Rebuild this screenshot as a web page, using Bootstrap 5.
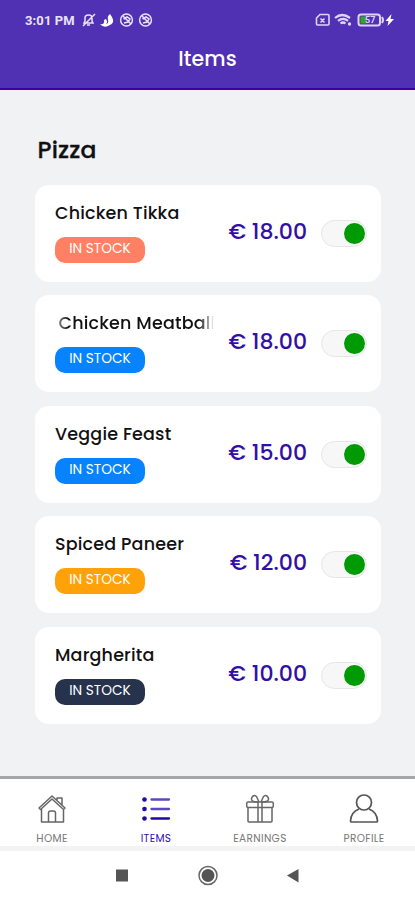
<!DOCTYPE html>
<html lang="en">
<head>
<meta charset="utf-8">
<meta name="viewport" content="width=device-width, initial-scale=1">
<title>Items</title>
<link href="https://cdn.jsdelivr.net/npm/bootstrap@5.3.0/dist/css/bootstrap.min.css" rel="stylesheet">
<style>
body{font-family:Poppins,Inter,"Noto Sans",sans-serif;background:#f0f2f4;width:415px;height:900px;overflow:hidden;line-height:1}
.app-head{height:90px;background:#5030b3;border-bottom:2px solid #3900a6;color:#fff}
.status-row{height:38px;padding:2px 20px 0 25px;color:#e9e2ff}
.clock{font:700 13px Roboto,sans-serif;letter-spacing:.1px}
.page-name{font-size:20.500px;font-weight:500;line-height:42px;letter-spacing:.15px}
.stage{height:686px;padding:61px 34px 0 34.500px}
.section-name{font-size:23.500px;font-weight:500;line-height:23px;margin:-13px 0 23.900px 3px;letter-spacing:.15px;color:#111;-webkit-text-stroke:.3px #111}
.item-card{height:97px;border-radius:14px;margin-bottom:13.500px;padding:15px 14px 0 20.500px}
.item-name{font-size:17.500px;font-weight:500;line-height:26px;color:#111;white-space:nowrap;letter-spacing:.18px;width:160px}
.scrolled{padding-left:3.500px;width:158px;-webkit-mask-image:linear-gradient(90deg,rgba(0,0,0,.35),#000 13px,#000 144px,rgba(0,0,0,.1) 158px)}
.stock{width:90px;height:26px;border-radius:10px;margin-top:11px;font-size:13.700px;line-height:24px;letter-spacing:0;color:#fff}
.coral{background:#ff8062}.azure{background:#0783ff}.amber{background:#ffa20a}.ink{background:#27334d}
.cost{font-size:22px;font-weight:500;color:#3210a5;white-space:nowrap;margin-top:20px;line-height:24px}
.toggle{width:46px;height:27px;border:1px solid #e6e6e6;border-radius:14px;background:#f7f7f7;margin:20px 0 0 14px;padding-right:1px}
.knob{width:21px;height:21px;border-radius:50%;background:#009a05}
.tabs{height:75px;border-top:3px solid #a5a6a8;border-bottom:5px solid #f3f3f3;background:#fff}
.tab{width:104px;flex:none;font-size:10.500px;color:#777;padding-top:14px;letter-spacing:.35px}
.tab.on{color:#3210b5}
.tab svg{display:block;margin-bottom:9px}
.sys{height:49px;background:#fff}
.sys svg{display:block}
</style>
<script src="https://cdn.jsdelivr.net/npm/bootstrap@5.3.0/dist/js/bootstrap.bundle.min.js"></script>
</head>
<body>
<header class="app-head">
<div class="status-row d-flex justify-content-between align-items-center">
<div class="d-flex align-items-center">
<span class="clock">3:01 PM</span>
<svg class="ms-1" width="76" height="18" viewBox="0 0 74 18" fill="none" stroke="#e9e2ff" stroke-width="1.500"><path d="M4 12h9l-1-2V7q0-3-3.500-3T5 7v3zM7 14h3M3 15 15 3"/><path d="M20 13q5 1 4-4l2-1q2 3 0 5 3-1 2-4-1-4 2-6l2 3q3 6-2 8-6 4-10-1z" fill="#fff" stroke="none"/><circle cx="46.500" cy="9" r="5.900"/><circle cx="65.500" cy="9" r="5.900"/><path d="M43.500 8 47 6l3 2-2 3-4 1M62.500 8 66 6l3 2-2 3-4 1M43 5l8 8M62 5l8 8"/></svg>
</div>
<svg width="80" height="18" viewBox="0 0 80 18" fill="none" stroke="#ddd3ff" stroke-width="1.600"><path d="M1.500 7 5 3.500h8q1 0 1 1v8.500q0 1-1 1H2.500q-1 0-1-1zM5.500 7.500l4 4M9.500 7.500l-4 4"/><path d="M20 7q7-6 15 0M23 9.800q5-4 10 0M25.500 12.500q2.500-2 5 0" stroke-width="2.200"/><circle cx="34.500" cy="13" r="1.700" fill="#ddd3ff" stroke="none"/><rect x="43.500" y="3.500" width="21.500" height="11" rx="2.500" stroke-width="2"/><path d="M67 6q2 3 0 6" stroke-width="2"/><path d="M45.500 5.500h6v7h-6z" fill="#35a51b" stroke="none"/><text x="50" y="12.200" font-family="Roboto" font-size="9" font-weight="700" fill="#ddd3ff" stroke="none">57</text><path d="m76.500 3-6 7h3l-1 5 6.500-7h-3.500z" fill="#fff" stroke="none"/></svg>
</div>
<div class="page-name text-center">Items</div>
</header>
<main class="stage">
<h1 class="section-name">Pizza</h1>
<div class="item-card bg-white d-flex"><div class="flex-grow-1"><div class="item-name">Chicken Tikka</div><div class="stock coral text-center">IN STOCK</div></div><div class="cost">€ 18.00</div><div class="toggle d-flex align-items-center justify-content-end"><div class="knob"></div></div></div>
<div class="item-card bg-white d-flex"><div class="flex-grow-1"><div class="item-name scrolled">Chicken Meatball</div><div class="stock azure text-center">IN STOCK</div></div><div class="cost">€ 18.00</div><div class="toggle d-flex align-items-center justify-content-end"><div class="knob"></div></div></div>
<div class="item-card bg-white d-flex"><div class="flex-grow-1"><div class="item-name">Veggie Feast</div><div class="stock azure text-center">IN STOCK</div></div><div class="cost">€ 15.00</div><div class="toggle d-flex align-items-center justify-content-end"><div class="knob"></div></div></div>
<div class="item-card bg-white d-flex"><div class="flex-grow-1"><div class="item-name">Spiced Paneer</div><div class="stock amber text-center">IN STOCK</div></div><div class="cost">€ 12.00</div><div class="toggle d-flex align-items-center justify-content-end"><div class="knob"></div></div></div>
<div class="item-card bg-white d-flex"><div class="flex-grow-1"><div class="item-name">Margherita</div><div class="stock ink text-center">IN STOCK</div></div><div class="cost">€ 10.00</div><div class="toggle d-flex align-items-center justify-content-end"><div class="knob"></div></div></div>
</main>
<nav class="tabs d-flex">
<div class="tab d-flex flex-column align-items-center"><svg width="30" height="32" viewBox="0 0 30 32" fill="none" stroke="#666" stroke-width="1.500" stroke-linejoin="round"><path d="M2 15 15 3l13 12-1.500 1.500L15 6 3.500 16.500zM4.500 16v13h22V16M11.500 29V20q0-2 2-2h3q2 0 2 2v9M20 7V5h5v7"/></svg>HOME</div>
<div class="tab on d-flex flex-column align-items-center"><svg width="30" height="32" viewBox="0 0 30 32" fill="none" stroke="#5b48bf" stroke-width="2.300" stroke-linecap="round"><path d="M10.500 6.500h17.500M10.500 16h17.500"/><path d="M10.500 25.500h17.500" stroke="#2407a5"/><g fill="#2407a5" stroke="none"><circle cx="3.500" cy="6.500" r="2.300"/><circle cx="3.500" cy="16" r="2.300"/><circle cx="3.500" cy="25.500" r="2.300"/></g></svg>ITEMS</div>
<div class="tab d-flex flex-column align-items-center"><svg width="30" height="32" viewBox="0 0 30 32" fill="none" stroke="#666" stroke-width="1.500"><rect x="1.700" y="9" width="26.600" height="5.500" rx="1.500"/><path d="M3 14.500V28q0 1 1 1h22q1 0 1-1V14.500M13 9v20M17 9v20M13 9Q6 9 6.500 5.500 8 1 11.500 3.500L14 9M17 9q7 0 6.500-3.500Q22 1 18.500 3.500L16 9"/></svg>EARNINGS</div>
<div class="tab d-flex flex-column align-items-center"><svg width="30" height="32" viewBox="0 0 30 32" fill="none" stroke="#555" stroke-width="1.700"><circle cx="15" cy="9.500" r="7.500"/><path d="M10 16Q2 19 1.500 28q0 1 1 1h25q1 0 1-1Q28 19 20 16"/></svg>PROFILE</div>
</nav>
<footer class="sys"><svg width="415" height="49" viewBox="0 851 415 49"><path d="M116 869.500h12v12h-12z" fill="#555"/><circle cx="208" cy="875.500" r="9" fill="none" stroke="#666" stroke-width="1.500"/><circle cx="208" cy="875.500" r="6.500" fill="#555"/><path d="M287 875.500 298.500 869v13.500z" fill="#555"/></svg></footer>
</body>
</html>
